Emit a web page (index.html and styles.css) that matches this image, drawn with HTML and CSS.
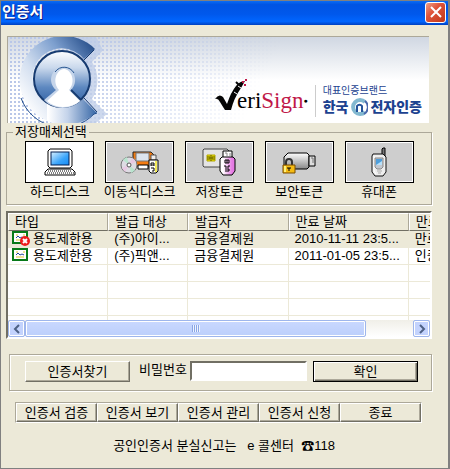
FILE: index.html
```html
<!DOCTYPE html>
<html lang="ko">
<head>
  <meta charset="UTF-8">
  <title>인증서</title>
  <link rel="stylesheet" href="styles.css">
</head>
<body>
  <div class="window">
    <header class="titlebar">
      <h1>인증서</h1>
      <button class="close" aria-label="닫기">
        <svg width="12" height="12" viewBox="0 0 12 12"><path d="M1 1L11 11M11 1L1 11" stroke="#fff" stroke-width="2"/></svg>
      </button>
    </header>

    <main class="content">
      <div class="banner">
        <svg class="emblem" width="110" height="86" viewBox="8 37 110 86">
          <defs>
            <linearGradient id="ring" gradientUnits="userSpaceOnUse" x1="20" y1="100" x2="95" y2="45">
              <stop offset="0" stop-color="#fff"/>
              <stop offset="0.3" stop-color="#d3dff0"/>
              <stop offset="0.65" stop-color="#7ea0cf"/>
              <stop offset="1" stop-color="#234b88"/>
            </linearGradient>
            <linearGradient id="ringLow" gradientUnits="userSpaceOnUse" x1="48" y1="0" x2="97" y2="0">
              <stop offset="0" stop-color="#fff"/>
              <stop offset="0.4" stop-color="#c4d3ea"/>
              <stop offset="1" stop-color="#3465a5"/>
            </linearGradient>
            <linearGradient id="disc" x1="0" y1="0" x2="0" y2="1">
              <stop offset="0" stop-color="#fff"/>
              <stop offset="0.3" stop-color="#c9d8ec"/>
              <stop offset="0.65" stop-color="#5d88c0"/>
              <stop offset="0.9" stop-color="#3a69a9"/>
            </linearGradient>
          </defs>
          <path d="M103 50L92 62A34 34 0 0 1 92 99L107 114L96 123H70V35H95Z" fill="#bccbe7" opacity="0.75"/>
          <path d="M95 49A44 44 0 1 0 48 121V103A29 29 0 1 1 84 59Z" fill="url(#ring)"/>
          <path d="M47 121A44 44 0 0 0 94 114L97 113L83 99A29 29 0 0 1 47 103Z" fill="url(#ringLow)"/>
          <path d="M21 98A44 44 0 0 0 94 114L97 113" fill="none" stroke="#234f8d" stroke-width="1"/>
          <circle cx="62" cy="79" r="28" fill="url(#disc)" stroke="#173b70" stroke-width="2"/>
          <path d="M84 60L94 50M84 98L97 112" stroke="#173b70" stroke-width="1"/>
          <path d="M44 100L56 90C47 82 51 68 63 67C75 68 79 82 71 90L81 100C71 111 53 110 44 100Z" fill="#c6d5ea"/>
          <path d="M55 72C60 65 70 66 74 73" fill="none" stroke="#285792" stroke-width="1"/>
          <path d="M47 101L59 90C52 82 56 70 64 69C72 70 76 82 69 90L80 101C70 109 56 109 47 101Z" fill="#fff"/>
          <path d="M71 90L81 100" stroke="#173b70" stroke-width="2"/>
        </svg>
        <div class="brands">
          <div class="verisign">
            <svg width="34" height="32" viewBox="0 0 34 32">
              <path d="M0 20Q4 14 8 18L12 25Q16 13 21 7Q25 2 30 2L26 9Q19 19 16 31H10Q8 28 5 23Q3 19 0 20Z" fill="#050505"/>
              <path d="M19 13L22 15M23 7L26 9" stroke="#fff" stroke-width="1"/>
              <path d="M21 3L24 6" stroke="#050505" stroke-width="2"/>
              <path d="M27 2H29V4H27ZM30 0H32V2H30ZM29 5H31V7H29Z" fill="#c01848"/>
            </svg>
            <span class="verisign-name">eri<b>Sign</b></span><span class="reg">●</span>
          </div>
          <div class="crosscert">
            <span class="slogan">대표인증브랜드</span>
            <span class="company">한국
              <svg width="18" height="20" viewBox="0 0 18 20">
                <path d="M15 5A7 7 0 1 0 15 15" fill="none" stroke="#82b8d0" stroke-width="4"/>
                <path d="M15 4A8 8 0 0 1 14 17" fill="none" stroke="#4a68ac" stroke-width="2"/>
                <path d="M7 15V9A3 3 0 0 1 12 9V15" fill="#fff" stroke="#24539a" stroke-width="2"/>
              </svg>
              전자인증</span>
          </div>
        </div>
      </div>

      <fieldset class="media">
        <legend>저장매체선택</legend>
        <button class="medium selected">
          <span class="tile">
            <svg width="32" height="30" viewBox="0 0 32 30">
              <defs><linearGradient id="screen" x1="0" y1="0" x2="1" y2="1"><stop offset="0" stop-color="#d8f0ff"/><stop offset="0.6" stop-color="#3aa4fa"/><stop offset="1" stop-color="#168cf4"/></linearGradient></defs>
              <path d="M6 2H26L28 4V19L26 21H6L4 19V4Z" fill="#fff" stroke="#000"/>
              <rect x="7" y="5" width="18" height="13" fill="url(#screen)" stroke="#001c50"/>
              <path d="M4 22H28L31 25V28H1V25Z" fill="#fff" stroke="#000"/>
              <path d="M4 24H28M3 26H30" stroke="#000" stroke-dasharray="1 1"/>
            </svg>
          </span>
          <span>하드디스크</span>
        </button>
        <button class="medium">
          <span class="tile">
            <svg width="40" height="26" viewBox="0 0 40 26">
              <path d="M13 3H31L34 6V17H13Z" fill="#f47c12" stroke="#222"/>
              <path d="M16 4H29V12H16Z" fill="#dce4ee" stroke="#777"/>
              <path d="M18 16H28V20H18Z" fill="#fff" stroke="#000"/>
              <circle cx="9" cy="16" r="8" fill="#dedbe3" stroke="#777"/>
              <path d="M9 16L3 11A8 8 0 0 1 7 8ZM9 16L15 21A8 8 0 0 1 11 24Z" fill="#b9e4ce"/>
              <path d="M9 16L12 9L16 13ZM9 16L2 19L5 23Z" fill="#e8c8e2"/>
              <circle cx="9" cy="16" r="2" fill="#fff" stroke="#555"/>
              <path d="M31 6H36V11H31Z" fill="#eee" stroke="#555"/>
              <path d="M29 11H38V22L36 24H31L29 22Z" fill="#fff" stroke="#000"/>
              <path d="M35 12H37V23H35Z" fill="#f5ec5a"/>
              <path d="M31 17V14H34V17M31 16H34M31 19H34V22H32" fill="none" stroke="#000"/>
            </svg>
          </span>
          <span>이동식디스크</span>
        </button>
        <button class="medium">
          <span class="tile">
            <svg width="34" height="28" viewBox="0 0 34 28">
              <defs><linearGradient id="usb"><stop offset="0.2" stop-color="#fff"/><stop offset="0.8" stop-color="#e57be3"/></linearGradient></defs>
              <path d="M2 1H25L27 3V19H2L1 18V2Z" fill="#e4e4e4" stroke="#444"/>
              <path d="M5 7H13V13H5Z" fill="#eee200" stroke="#b4a800"/>
              <path d="M5 9H8V11H5M13 9H10V11H13M9 7V13" fill="none" stroke="#635d00"/>
              <path d="M21 3H30V10H21Z" fill="#fff" stroke="#000"/>
              <path d="M23 5H25V8M28 5V8" fill="none" stroke="#888"/>
              <path d="M20 9H31L33 11V23L30 27H21L18 23V11Z" fill="url(#usb)" stroke="#000"/>
              <path d="M23 23H27V21H23M23 19H27M23 17V19M27 17V19M23 15H27V12H23V15M25 12V15" fill="none" stroke="#000"/>
            </svg>
          </span>
          <span>저장토큰</span>
        </button>
        <button class="medium">
          <span class="tile">
            <svg width="34" height="24" viewBox="0 0 34 24">
              <defs><linearGradient id="token" x1="0" y1="0" x2="0" y2="1"><stop offset="0" stop-color="#fff"/><stop offset="1" stop-color="#888"/></linearGradient></defs>
              <path d="M6 3H25L27 5V17L25 19H6L2 15V7Z" fill="url(#token)" stroke="#000"/>
              <path d="M27 6H33V16H27Z" fill="#ddd" stroke="#000"/>
              <path d="M29 8H31V13" fill="none" stroke="#777"/>
              <path d="M4 15V12A3 3 0 0 1 10 12V15" fill="none" stroke="#333" stroke-width="2"/>
              <path d="M1 15H13V23H1Z" fill="#f5bb13" stroke="#7b4c00"/>
              <path d="M2 16H4V22H2Z" fill="#fff27b"/>
              <path d="M5 18H9M7 18V21" stroke="#000"/>
            </svg>
          </span>
          <span>보안토큰</span>
        </button>
        <button class="medium">
          <span class="tile">
            <svg width="18" height="30" viewBox="0 0 18 30">
              <path d="M12 7V2L13 1H15V9" fill="#777" stroke="#000"/>
              <path d="M3 7H13L16 10V25L13 29H5L2 25V9Z" fill="#eee" stroke="#111"/>
              <path d="M4 9V24L6 27" stroke="#fff" fill="none"/>
              <path d="M5 11H13V20L11 22H7L5 20Z" fill="#c3c8d0" stroke="#888"/>
              <path d="M6 12H12V18H6Z" fill="#4e9edb"/>
              <path d="M6 18L12 14V18Z" fill="#b8e1fa"/>
              <path d="M7 24H12M8 26H11" stroke="#aaa"/>
            </svg>
          </span>
          <span>휴대폰</span>
        </button>
      </fieldset>

      <div class="list">
        <div class="list-view">
          <table>
            <colgroup>
              <col class="col-type"><col class="col-target"><col class="col-issuer"><col class="col-date"><col class="col-state">
            </colgroup>
            <thead>
              <tr><th>타입</th><th>발급 대상</th><th>발급자</th><th>만료 날짜</th><th>만료</th></tr>
            </thead>
            <tbody>
              <tr class="current">
                <td>
                  <svg width="18" height="15" viewBox="0 0 18 15">
                    <path d="M1 1H15V12H1Z" fill="#fff" stroke="#087a18" stroke-width="2"/>
                    <path d="M4 4H6M11 4H13M4 9H12" stroke="#e0c52d"/>
                    <path d="M4 7L6 5L8 7L10 6L12 7" stroke="#24469c" fill="none"/>
                    <circle cx="13" cy="10" r="5" fill="#ed1c1c"/>
                    <path d="M11 8L15 12M15 8L11 12" stroke="#fff" stroke-width="2"/>
                  </svg>용도제한용
                </td>
                <td>(주)아이...</td><td>금융결제원</td><td>2010-11-11 23:5...</td><td>만료</td>
              </tr>
              <tr>
                <td>
                  <svg width="18" height="15" viewBox="0 0 18 15">
                    <path d="M1 1H15V12H1Z" fill="#fff" stroke="#087a18" stroke-width="2"/>
                    <path d="M4 4H6M11 4H13M4 9H12" stroke="#e0c52d"/>
                    <path d="M4 7L6 5L8 7L10 6L12 7" stroke="#24469c" fill="none"/>
                  </svg>용도제한용
                </td>
                <td>(주)픽앤...</td><td>금융결제원</td><td>2011-01-05 23:5...</td><td>인증</td>
              </tr>
              <tr><td></td><td></td><td></td><td></td><td></td></tr>
              <tr><td></td><td></td><td></td><td></td><td></td></tr>
              <tr><td></td><td></td><td></td><td></td><td></td></tr>
              <tr><td></td><td></td><td></td><td></td><td></td></tr>
            </tbody>
          </table>
        </div>
        <div class="scrollbar">
          <button class="arrow" aria-label="왼쪽">
            <svg width="8" height="10" viewBox="0 0 8 10"><path d="M6 1L2 5L6 9" fill="none" stroke="#4d6185" stroke-width="2"/></svg>
          </button>
          <div class="track"><div class="thumb"><i class="grip"></i></div></div>
          <button class="arrow" aria-label="오른쪽">
            <svg width="8" height="10" viewBox="0 0 8 10"><path d="M2 1L6 5L2 9" fill="none" stroke="#4d6185" stroke-width="2"/></svg>
          </button>
        </div>
      </div>

      <form class="login">
        <button type="button" class="btn">인증서찾기</button>
        <label for="password">비밀번호</label>
        <input id="password" type="password">
        <button type="button" class="btn default">확인</button>
      </form>

      <nav class="actions">
        <button>인증서 검증</button>
        <button>인증서 보기</button>
        <button>인증서 관리</button>
        <button>인증서 신청</button>
        <button>종료</button>
      </nav>

      <p class="footer">공인인증서 분실신고는 &nbsp; e 콜센터 &nbsp;☎118</p>
    </main>
  </div>
</body>
</html>
```
FILE: styles.css
```css
* {
  box-sizing: border-box;
}

body {
  margin: 0;
  background: #ece9d8;
  color: #000;
  font: 13px/16px "Liberation Sans", "Noto Sans CJK KR", sans-serif;
}

button, input {
  font: inherit;
  color: inherit;
}

button {
  padding: 0;
  white-space: nowrap;
}

svg {
  display: block;
  flex: none;
}

.window {
  min-height: 100vh;
  border: 1px solid #808080;
  border-right-width: 2px;
  background: #ece9d8;
}

.titlebar {
  display: flex;
  align-items: center;
  justify-content: space-between;
  height: 24px;
  padding: 0 2px 2px 1px;
  background: linear-gradient(#0a6cf5, #0054e3 15%, #0058ec 55%, #0066ff 85%, #0040c0);
}

.titlebar h1 {
  margin: 0;
  color: #fff;
  font-size: 15px;
  font-weight: bold;
  line-height: 20px;
  text-shadow: 1px 1px #0a1883;
}

.close {
  display: flex;
  align-items: center;
  justify-content: center;
  width: 21px;
  height: 21px;
  border: 1px solid #fff;
  border-radius: 3px;
  background: linear-gradient(135deg, #f0a088, #e0543a 40%, #c03818);
}

.content {
  padding: 11px 16px 10px 5px;
}

/* banner */

.banner {
  position: relative;
  display: flex;
  justify-content: space-between;
  height: 87px;
  margin: 0 3px 0 1px;
  overflow: hidden;
  border-top: 1px solid #aca899;
  border-left: 1px solid #aca899;
  background: linear-gradient(#d0d7e2, #fff 50%);
}

.banner::before {
  content: "";
  position: absolute;
  inset: 0;
  background: conic-gradient(#b9c7e8 25%, transparent 0) 0 0 / 4px 4px;
  -webkit-mask-image: linear-gradient(115deg, #000 15%, transparent 60%);
  mask-image: linear-gradient(115deg, #000 15%, transparent 60%);
}

.emblem,
.brands {
  position: relative;
}

.brands {
  display: flex;
  align-items: flex-end;
  padding: 0 7px 6px 0;
}

.verisign {
  display: flex;
  align-items: flex-end;
  padding-right: 4px;
  margin-right: 3px;
  height: 32px;
}

.verisign svg {
  margin: 0 -12px 6px 0;
}

.verisign-name {
  font: 23px/32px "Liberation Serif", serif;
}

.verisign-name b {
  color: #c01848;
  font-weight: normal;
}

.reg {
  font-size: 7px;
  line-height: 32px;
}

.crosscert {
  display: flex;
  flex-direction: column;
  padding-left: 7px;
  border-left: 1px solid #ccc;
  color: #1c4290;
}

.slogan {
  font-size: 10px;
  line-height: 12px;
}

.company {
  display: flex;
  align-items: center;
  gap: 2px;
  font-size: 14px;
  font-weight: 900;
  line-height: 20px;
}

/* storage media */

.media {
  display: grid;
  grid-template-columns: repeat(5, 1fr);
  min-width: 0;
  margin: 1px 0 0;
  padding: 1px 12px 4px 13px;
  border: 1px solid #aca899;
  box-shadow: 1px 1px #fff;
}

.media legend {
  margin-left: -7px;
  padding: 0 2px;
}

.medium {
  display: flex;
  flex-direction: column;
  align-items: center;
  gap: 1px;
  border: 0;
  background: none;
}

.tile {
  display: flex;
  align-items: center;
  justify-content: center;
  width: 69px;
  height: 42px;
  border: 1px solid #000;
  box-shadow: inset 0 0 0 1px #fff;
  background: #cecece;
}

.selected .tile {
  background: #fff;
}

/* certificate list */

.list {
  margin-top: 6px;
  border: 2px solid;
  border-color: #716f64 #fff #fff #716f64;
  background: #fff;
}

.list-view {
  height: 107px;
  overflow: hidden;
}

table {
  width: 501px;
  table-layout: fixed;
  border-collapse: separate;
  border-spacing: 0;
}

.col-type,
.col-issuer,
.col-state {
  width: 100px;
}

.col-target {
  width: 80px;
}

.col-date {
  width: 120px;
}

th, td {
  height: 17px;
  padding: 0 0 0 6px;
  overflow: hidden;
  font-weight: normal;
  line-height: 16px;
  text-align: left;
  white-space: nowrap;
}

th {
  height: 18px;
  border: 1px solid;
  border-color: #fff #aca899 #716f64 #fff;
  background: #ece9d8;
}

td {
  border-right: 1px solid #ece9d8;
  border-bottom: 1px solid #ece9d8;
}

td:first-child {
  padding-left: 4px;
}

td svg {
  display: inline-block;
  margin-right: 3px;
  vertical-align: -3px;
}

.current td {
  background: #ece9d8;
}

.scrollbar {
  display: flex;
  height: 17px;
  background: linear-gradient(#f0efe8, #fff);
}

.arrow {
  display: flex;
  align-items: center;
  justify-content: center;
  width: 17px;
  border: 1px solid #9eb6ec;
  border-radius: 2px;
  box-shadow: inset 0 0 0 1px #fff;
  background: #c3d3fd;
}

.track {
  flex: 1;
}

.thumb {
  display: flex;
  align-items: center;
  justify-content: center;
  width: 88%;
  height: 17px;
  border: 1px solid #9eb6ec;
  border-radius: 2px;
  box-shadow: inset 0 0 0 1px #fff;
  background: linear-gradient(#c9d8ff, #bccffb);
}

.grip {
  width: 8px;
  height: 7px;
  background: repeating-linear-gradient(to right, #8ba6e6 0 1px, #eef4fe 1px 2px);
}

/* password row */

.login {
  display: flex;
  align-items: flex-start;
  height: 37px;
  margin: 15px 0 0 3px;
  padding: 6px 13px 0 15px;
  border: 1px solid #aca899;
  box-shadow: 1px 1px #fff, inset 1px 1px #fff;
}

.btn {
  width: 105px;
  height: 21px;
  border: 1px solid;
  border-color: #fff #716f64 #716f64 #fff;
  box-shadow: inset -1px -1px #aca899;
  background: #ece9d8;
  line-height: 17px;
}

.default {
  border-color: #000;
  box-shadow: inset 1px 1px #fff, inset -1px -1px #716f64, inset -2px -2px #aca899;
}

.login label {
  margin: 0 3px 0 9px;
  line-height: 18px;
}

.login input {
  flex: 1;
  min-width: 0;
  height: 20px;
  margin-right: 6px;
  border: 2px solid;
  border-color: #716f64 #fff #fff #716f64;
  background: #fff;
}

/* bottom buttons */

.actions {
  display: grid;
  grid-template-columns: repeat(5, 1fr);
  margin: 11px 10px 0 9px;
  border: 1px solid;
  border-color: #aca899 #fff #fff #aca899;
}

.actions button {
  height: 19px;
  border: 1px solid;
  border-color: #fff #716f64 #716f64 #fff;
  box-shadow: inset -1px -1px #aca899;
  background: #ece9d8;
  line-height: 17px;
}

.footer {
  margin: 15px 0 0 10px;
  text-align: center;
}
```
